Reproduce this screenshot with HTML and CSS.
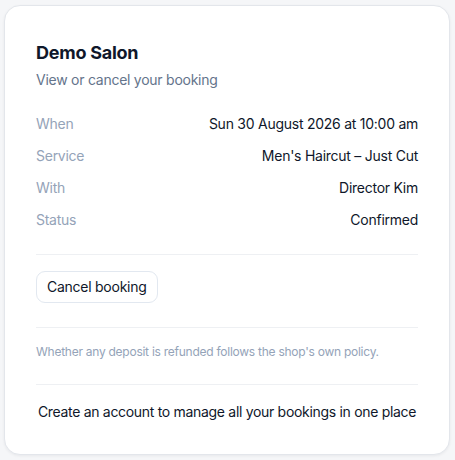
FILE: index.html
```html
<!DOCTYPE html>
<html lang="en">

<head>
    <meta charset="UTF-8">
    <meta name="viewport" content="width=device-width, initial-scale=1.0">
    <title>Manage booking</title>
    <link rel="stylesheet" href="styles.css">
</head>

<body>
    <div class="card">
        <h1 class="salon-name">Demo Salon</h1>
        <p class="subtitle">View or cancel your booking</p>

        <div class="details">
            <div class="row">
                <span class="label">When</span>
                <span class="value">Sun 30 August 2026 at 10:00 am</span>
            </div>
            <div class="row">
                <span class="label">Service</span>
                <span class="value">Men's Haircut – Just Cut</span>
            </div>
            <div class="row">
                <span class="label">With</span>
                <span class="value">Director Kim</span>
            </div>
            <div class="row">
                <span class="label">Status</span>
                <span class="value">Confirmed</span>
            </div>
        </div>

        <div class="actions">
            <button class="cancel-btn">Cancel booking</button>
        </div>

        <p class="note">Whether any deposit is refunded follows the shop's own policy.</p>

        <p class="account">Create an account to manage all your bookings in one place</p>
    </div>
</body>

</html>
```

FILE: styles.css
```css
body {
    font-family: Inter, "Noto Sans", sans-serif;
    letter-spacing: -0.016em;
    margin: 0;
    padding: 5px 5px 7px 4px;
    background: #f5f6f8;
    color: #0f172a;
}

.card {
    background: #fff;
    border: 1px solid #e3e6eb;
    border-radius: 16px;
    box-shadow: 0px 1px 3px rgba(15, 23, 42, 0.06);
    padding: 30px 31px 32px 31px;
}

.salon-name {
    font-size: 18px;
    font-weight: 700;
    line-height: 30px;
    margin: 0;
    padding-top: 2px;
}

.subtitle {
    font-size: 14px;
    line-height: 20px;
    color: #64748b;
    margin: 2px 0 0;
}

.details {
    margin-top: 24px;
    display: flex;
    flex-direction: column;
    gap: 12px;
    padding-bottom: 24px;
    border-bottom: 1px solid #eef0f3;
}

.row {
    display: flex;
    justify-content: space-between;
    font-size: 14px;
    line-height: 20px;
}

.label {
    color: #94a3b8;
}

.value {
    color: #0f172a;
}

.actions {
    padding: 16px 0 24px;
    border-bottom: 1px solid #eef0f3;
}

.cancel-btn {
    font-family: inherit;
    font-size: 14px;
    letter-spacing: inherit;
    line-height: 20px;
    color: #0f172a;
    background: #fff;
    border: 1px solid #e2e8f0;
    border-radius: 9px;
    padding: 5px 10px;
}

.note {
    font-size: 12px;
    line-height: 16px;
    color: #94a3b8;
    margin: 0;
    padding: 16px 0 24px;
    border-bottom: 1px solid #eef0f3;
}

.account {
    font-size: 14px;
    letter-spacing: -0.022em;
    line-height: 20px;
    text-align: center;
    margin: 17px 0 0;
}
```
